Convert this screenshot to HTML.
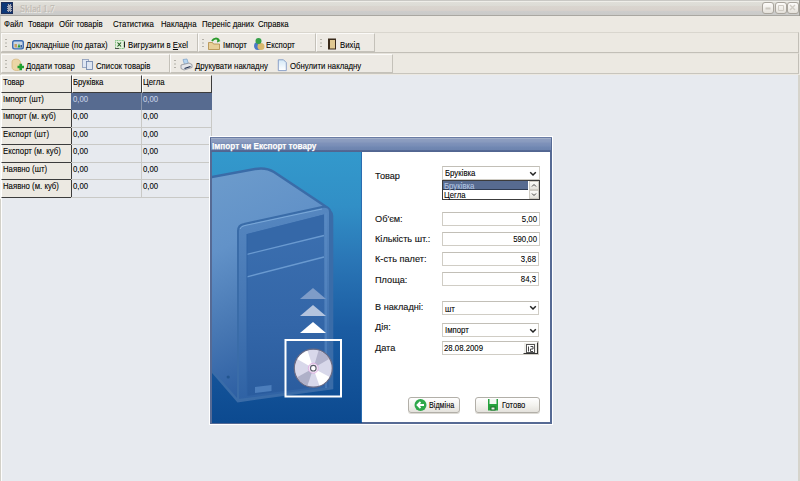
<!DOCTYPE html>
<html><head><meta charset="utf-8">
<style>
*{box-sizing:border-box}
html,body{margin:0;padding:0}
body{width:800px;height:481px;overflow:hidden;position:relative;background:#E7EAEF;font-family:"Liberation Sans",sans-serif;font-size:8.4px;line-height:10px;color:#000}
.a{position:absolute;white-space:nowrap}
.t{position:absolute;white-space:nowrap;transform:scaleX(.93);transform-origin:0 0;-webkit-text-stroke:0.08px currentColor}
.f{position:absolute;white-space:nowrap;font-size:9.5px;line-height:12px;transform:scaleX(.965);transform-origin:0 0;color:#111;-webkit-text-stroke:0.12px #111}
.tb{position:absolute;height:20px;background:#EDEAE4;border-top:1px solid #fbfaf8;border-left:1px solid #fbfaf8;border-right:1px solid #c4c1b9;border-bottom:1px solid #c4c1b9}
.grip{position:absolute;left:3px;top:4.5px;width:1.5px;height:1.5px;background:#b4b1a9;box-shadow:0 3.5px 0 #b4b1a9,0 7px 0 #b4b1a9}
.wbtn{position:absolute;top:2px;width:12px;height:12px;border:1px solid #a9a59d;border-radius:3px;background:linear-gradient(#fdfcfa,#e4e1da)}
.hc{position:absolute;background:#ECE9E2;border-top:1px solid #fff;border-left:1px solid #fff;border-right:1px solid #3c3c3c;border-bottom:1px solid #3c3c3c}
.gc{position:absolute;border-right:1px solid #c9c9c6;border-bottom:1px solid #c9c9c6}
.fld{position:absolute;background:#fff;border:1px solid #d0cdc5;border-top-color:#c2bfb7}
.chev{position:absolute;width:6px;height:6px;border-right:1.6px solid #333;border-bottom:1.6px solid #333;transform:rotate(45deg)}
.btn{position:absolute;height:16px;border:1px solid #b2afa8;border-radius:3px;background:linear-gradient(#ffffff,#f4f3ef 50%,#e4e2dc);box-shadow:0 1px 0 #dcdad4}
</style></head>
<body>
<!-- title bar -->
<div class="a" style="left:0;top:0;width:800px;height:16px;background:linear-gradient(#c9c8c4 0,#c9c8c4 1px,#efeee9 1px,#efeee9 2px,#e0dfd9 2px,#dcdbd5 6px,#dad5cf 6px,#d8d2cc 10px,#d6d0cb 10px,#d6d0cb 11px,#cdcdcc 11px,#cacac8 15px,#a9a7a1 15px,#a9a7a1 16px)"></div>
<div class="a" style="left:1px;top:2px;width:12px;height:12px;background:#0d3878;border:1px solid #1e2e58"><div class="a" style="left:5px;top:1px;width:5px;height:8px;background:#a8acb8;border:1px dotted #2a3a68"></div></div>
<div class="a" style="left:19.5px;top:2.5px;font-family:'Liberation Serif',serif;font-weight:normal;font-size:10.5px;line-height:12px;color:#bdb9b1;-webkit-text-stroke:0.2px #c4c0b8;text-shadow:1px 1px 0 #f0eee8;transform:scaleX(.87);transform-origin:0 0">Sklad 1.7</div>
<div class="wbtn" style="left:762px"></div>
<div class="wbtn" style="left:775px"></div>
<div class="wbtn" style="left:787px"></div>
<svg class="a" style="left:760px;top:0" width="40" height="16" viewBox="760 0 40 16"><path d="M765.5 8.5h5" stroke="#cdc9c1" stroke-width="2"/><path d="M778.5 5.5h5v5h-5z" stroke="#d0ccc4" stroke-width="1" fill="none"/><path d="M790 5l5 5M795 5l-5 5" stroke="#d0ccc4" stroke-width="1.4"/></svg>
<div class="a" style="left:799px;top:0;width:1px;height:16px;background:#9a988f"></div>
<!-- menu -->
<div class="a" style="left:0;top:16px;width:800px;height:59px;background:#ECE9E2"></div>
<span class="t" style="left:4px;top:19px">Файл</span>
<span class="t" style="left:28px;top:19px">Товари</span>
<span class="t" style="left:59px;top:19px">Обіг товарів</span>
<span class="t" style="left:112.5px;top:19px">Статистика</span>
<span class="t" style="left:160.5px;top:19px">Накладна</span>
<span class="t" style="left:202px;top:19px">Переніс даних</span>
<span class="t" style="left:258px;top:19px">Справка</span>
<!-- dock -->
<div class="a" style="left:1px;top:32px;width:798px;height:21px;border-top:1px solid #d9d6ce;border-right:1px solid #c2bfb7;border-bottom:1px solid #c2bfb7"></div>
<div class="a" style="left:1px;top:53px;width:798px;height:21px;border-top:1px solid #e6e3dc;border-right:1px solid #c2bfb7;border-bottom:1px solid #c8c5bd"></div>
<div class="tb" style="left:1px;top:33px;width:197px;height:19px"><div class="grip"></div></div>
<div class="tb" style="left:198px;top:33px;width:118px;height:19px"><div class="grip"></div></div>
<div class="tb" style="left:316px;top:33px;width:59px;height:19px"><div class="grip"></div></div>
<div class="tb" style="left:1px;top:54px;width:169px;height:19px"><div class="grip"></div></div>
<div class="tb" style="left:170px;top:54px;width:223px;height:19px"><div class="grip"></div></div>
<span class="t" style="left:25.8px;top:39.5px">Докладніше (по датах)</span>
<span class="t" style="left:128px;top:39.5px">Вигрузити в <u style="text-decoration-thickness:1px;text-underline-offset:1px">E</u>xel</span>
<span class="t" style="left:222.5px;top:39.5px">Імпорт</span>
<span class="t" style="left:266px;top:39.5px">Експорт</span>
<span class="t" style="left:340px;top:39.5px">Вихід</span>
<span class="t" style="left:25.6px;top:61px">Додати товар</span>
<span class="t" style="left:95.6px;top:61px">Список товарів</span>
<span class="t" style="left:194.5px;top:61px">Друкувати накладну</span>
<span class="t" style="left:289.7px;top:61px">Обнулити накладну</span>
<!-- toolbar icons -->
<svg class="a" style="left:0;top:0" width="400" height="75" viewBox="0 0 400 75">
  <!-- details icon -->
  <rect x="12.7" y="40.7" width="10.6" height="8.2" rx="1.8" fill="#c9d6e6" stroke="#3d6cb0" stroke-width="1.4"/>
  <rect x="14.5" y="44" width="2.5" height="3.5" fill="#c9a060"/><path d="M17.5 47.5l1.5-4 1.5 4z" fill="#2a9a3a"/><rect x="20.5" y="45" width="1.5" height="2.5" fill="#3a5a90"/>
  <!-- excel icon -->
  <rect x="115.5" y="40.5" width="8.5" height="8" fill="#e4f0dc" stroke="#7cc07c" stroke-width="1" stroke-dasharray="1 0.6"/>
  <path d="M117.5 42.5l3.5 4M121 42.5l-3.5 4" stroke="#1a5a1a" stroke-width="1.1"/>
  <path d="M124.5 41.5v6" stroke="#222" stroke-width="1"/><path d="M115 48.5h4" stroke="#333" stroke-width="0.8"/>
  <!-- import icon -->
  <path d="M208.5 42.5h4l1 1.5h6v5.5h-11z" fill="#e7cf99" stroke="#b08a45" stroke-width="0.8"/>
  <path d="M212 41c2-3 5-3 7 -1" stroke="#2a9a2a" stroke-width="2" fill="none"/><path d="M217.5 38.5l3 2.5-3.5 1.5z" fill="#2a9a2a"/>
  <!-- export icon -->
  <circle cx="258" cy="46" r="4" fill="#4a78c8"/><circle cx="261" cy="46.5" r="3.5" fill="#d9b86e"/><circle cx="258.5" cy="41" r="3" fill="#36a04a"/>
  <!-- exit icon -->
  <rect x="328" y="38.5" width="8" height="11" fill="#3a2a1a"/><rect x="330" y="40" width="5" height="8.5" fill="#e0c890"/>
  <!-- add icon -->
  <path d="M14 59.5c3-1 6 0 6.5 3l0.5 5c0 2.5-2 3-4.5 3s-4.5-1-4.5-3.5l0-5c0-1.5 1-2.3 2-2.5z" fill="#ebd6a6" stroke="#d2b274" stroke-width="0.7"/>
  <path d="M17.5 67h6.5M20.75 63.75v6.5" stroke="#20a030" stroke-width="2.6"/>
  <!-- list icon -->
  <rect x="82.5" y="59.5" width="6" height="8" fill="#dfe6f2" stroke="#8a9ab8" stroke-width="0.8"/>
  <rect x="86.5" y="61.5" width="6" height="8" fill="#dfe6f2" stroke="#6a80a8" stroke-width="0.8"/>
  <!-- printer icon -->
  <path d="M183 59.5l4-0.5 1.5 5-4 0.5z" fill="#b8d6f0" stroke="#7aa0c8" stroke-width="0.7"/>
  <path d="M181 65l8-2 3 1.5v3l-8 2.5-3-1.5z" fill="#e4e6ea" stroke="#8a8e96" stroke-width="0.8"/>
  <path d="M184.5 68.5l6-2" stroke="#1a2a4a" stroke-width="1.3"/>
  <!-- doc icon -->
  <defs><linearGradient id="dg" x1="0" y1="0" x2="0" y2="1"><stop offset="0" stop-color="#d4e8f6"/><stop offset="1" stop-color="#ffffff"/></linearGradient></defs><path d="M278.3 59.8h5.2l2.8 2.8v8h-8z" fill="url(#dg)" stroke="#8098c4" stroke-width="0.9"/>
</svg>
<div class="a" style="left:0;top:16px;width:1px;height:465px;background:#d2d0c8"></div>
<div class="a" style="left:1px;top:75px;width:1px;height:406px;background:#fdfdfd"></div>
<div class="a" style="left:798px;top:75px;width:2px;height:406px;background:#d6d4cc"></div>
<!-- grid -->
<div class="a" style="left:0;top:75px;width:1px;height:124px;background:#f6f6f4"></div>
<div class="hc" style="left:1px;top:75px;width:71px;height:18px"></div>
<div class="hc" style="left:72px;top:75px;width:70px;height:18px"></div>
<div class="hc" style="left:142px;top:75px;width:70px;height:18px"></div>
<span class="t" style="left:2.6px;top:77px">Товар</span>
<span class="t" style="left:73px;top:77px">Бруківка</span>
<span class="t" style="left:143px;top:77px">Цегла</span>
<div class="hc" style="left:1px;top:93.0px;width:71px;height:17.0px;border-top:none"></div>
<div class="a" style="left:71px;top:93.0px;width:141px;height:17.0px;background:#576b90"></div>
<div class="a" style="left:141px;top:93.0px;width:1px;height:17.0px;background:#8a96ac"></div>
<span class="t" style="left:2.6px;top:94.2px">Імпорт (шт)</span>
<span class="t" style="left:73px;top:94.2px; color:#c8d2e6;">0,00</span>
<span class="t" style="left:143px;top:94.2px; color:#c8d2e6;">0,00</span>
<div class="hc" style="left:1px;top:110.0px;width:71px;height:17.5px;border-top:none"></div>
<div class="gc" style="left:71px;top:110.0px;width:71px;height:17.5px"></div>
<div class="gc" style="left:141px;top:110.0px;width:71px;height:17.5px"></div>
<span class="t" style="left:2.6px;top:111.2px">Імпорт (м. куб)</span>
<span class="t" style="left:73px;top:111.2px;">0,00</span>
<span class="t" style="left:143px;top:111.2px;">0,00</span>
<div class="hc" style="left:1px;top:127.5px;width:71px;height:17.5px;border-top:none"></div>
<div class="gc" style="left:71px;top:127.5px;width:71px;height:17.5px"></div>
<div class="gc" style="left:141px;top:127.5px;width:71px;height:17.5px"></div>
<span class="t" style="left:2.6px;top:128.7px">Експорт (шт)</span>
<span class="t" style="left:73px;top:128.7px;">0,00</span>
<span class="t" style="left:143px;top:128.7px;">0,00</span>
<div class="hc" style="left:1px;top:145.0px;width:71px;height:17.5px;border-top:none"></div>
<div class="gc" style="left:71px;top:145.0px;width:71px;height:17.5px"></div>
<div class="gc" style="left:141px;top:145.0px;width:71px;height:17.5px"></div>
<span class="t" style="left:2.6px;top:146.2px">Експорт (м. куб)</span>
<span class="t" style="left:73px;top:146.2px;">0,00</span>
<span class="t" style="left:143px;top:146.2px;">0,00</span>
<div class="hc" style="left:1px;top:162.5px;width:71px;height:17.5px;border-top:none"></div>
<div class="gc" style="left:71px;top:162.5px;width:71px;height:17.5px"></div>
<div class="gc" style="left:141px;top:162.5px;width:71px;height:17.5px"></div>
<span class="t" style="left:2.6px;top:163.7px">Наявно (шт)</span>
<span class="t" style="left:73px;top:163.7px;">0,00</span>
<span class="t" style="left:143px;top:163.7px;">0,00</span>
<div class="hc" style="left:1px;top:180.0px;width:71px;height:17.5px;border-top:none"></div>
<div class="gc" style="left:71px;top:180.0px;width:71px;height:17.5px"></div>
<div class="gc" style="left:141px;top:180.0px;width:71px;height:17.5px"></div>
<span class="t" style="left:2.6px;top:181.2px">Наявно (м. куб)</span>
<span class="t" style="left:73px;top:181.2px;">0,00</span>
<span class="t" style="left:143px;top:181.2px;">0,00</span>
<!-- dialog -->
<div class="a" style="left:209px;top:136px;width:344px;height:289px;background:#fff"></div>
<div class="a" style="left:210px;top:137px;width:342px;height:287px;background:#566a94"></div>
<div class="a" style="left:210px;top:137px;width:342px;height:1px;background:#6a7ca4"></div><div class="a" style="left:211px;top:138px;width:340px;height:14px;background:linear-gradient(#a2afc8 0,#a2afc8 1px,#8e9ec0 1px,#889abe 4px,#7f92ba 5px,#788db6 8px,#7188b3 9px,#6c83ae 12px,#566a96 12px,#50648f 14px)"></div>
<div class="a" style="left:212px;top:141px;font-weight:bold;font-size:8.8px;line-height:11px;color:#fff;transform:scaleX(.93);transform-origin:0 0;-webkit-text-stroke:0.25px #fff;text-shadow:0 0 1px #5a6e98">Імпорт чи Експорт товару</div>
<div class="a" style="left:362px;top:152px;width:188px;height:270px;background:#fff"></div>
<svg class="a" style="left:212px;top:152px" width="150" height="271" viewBox="212 152 150 271">
  <defs>
    <linearGradient id="bg" x1="0" y1="0" x2="0" y2="1">
      <stop offset="0" stop-color="#3399cc"/>
      <stop offset="0.2" stop-color="#318fc6"/>
      <stop offset="0.4" stop-color="#2a76b6"/>
      <stop offset="0.65" stop-color="#1b5ca2"/>
      <stop offset="1" stop-color="#0c4a90"/>
    </linearGradient>
    <linearGradient id="tw" x1="0" y1="0" x2="0.25" y2="1">
      <stop offset="0" stop-color="#6d9ccc"/>
      <stop offset="0.35" stop-color="#6292c8"/>
      <stop offset="0.7" stop-color="#4676b2"/>
      <stop offset="1" stop-color="#2c5ea2"/>
    </linearGradient>
    <linearGradient id="fr" x1="0" y1="0" x2="0" y2="1">
      <stop offset="0" stop-color="#5687c0"/>
      <stop offset="0.5" stop-color="#4677b4"/>
      <stop offset="1" stop-color="#2f62a4"/>
    </linearGradient>
    <linearGradient id="cd" x1="0" y1="0" x2="1" y2="1">
      <stop offset="0" stop-color="#f0f0f8"/>
      <stop offset="0.3" stop-color="#dcdcec"/>
      <stop offset="0.45" stop-color="#a8a8c0"/>
      <stop offset="0.6" stop-color="#e8e8f4"/>
      <stop offset="0.8" stop-color="#c0c0d8"/>
      <stop offset="1" stop-color="#9898b0"/>
    </linearGradient>
  <clipPath id="cdc"><circle cx="313.3" cy="368.2" r="18.4"/></clipPath>
  <linearGradient id="inr" x1="0" y1="0" x2="0" y2="1"><stop offset="0" stop-color="#3c70b0"/><stop offset="0.6" stop-color="#3366a8"/><stop offset="1" stop-color="#2a5c9e"/></linearGradient>
  </defs>
  <rect x="212" y="152" width="150" height="271" fill="url(#bg)"/>
  <!-- silhouette -->
  <path d="M208 177.7 L255 169 Q266 167 274 172 L322 204 Q332 210 332 216 L332 388 L238 401 L212 371 L208 366 Z" fill="url(#tw)" stroke="#3a6ca8" stroke-width="2.6"/>
  <!-- front frame -->
  <path d="M238 231 Q238 225 244 224 L322 207 Q330 206 330 212 L330 388 L238 400 Z" fill="url(#fr)" stroke="#3a6ca8" stroke-width="2"/>
  <path d="M240 229 Q241 226 245 225.5 L322 209" fill="none" stroke="#7aa8d8" stroke-width="1"/>
  <!-- inner panel -->
  <path d="M247 234 L324 214.5 L324 386 L247 396 Z" fill="url(#inr)"/>
  <path d="M247 234 L324 214.5 L324 235.5 L247 254.3 Z" fill="#3568a8"/>
  <path d="M247 254.3 L324 235.5 M247 276.8 L324 257" stroke="#6a9ad0" stroke-width="1.3" fill="none"/>
  <path d="M247 234 L247 396" stroke="#2e62a4" stroke-width="1"/>
  <path d="M326 213 L326 388" stroke="#5a8cc6" stroke-width="1"/>
  <path d="M255 387 L271.5 385 L271.5 391 L255 393 Z" fill="#4c7ebc"/>
  <circle cx="228.2" cy="377" r="1.6" fill="#22558f"/>
  <!-- arrows -->
  <path d="M300 299 L313 288 L326 299 Z" fill="#7e9cc8"/>
  <path d="M300 316 L313 305 L326 316 Z" fill="#b4c4de"/>
  <path d="M300 333 L313 322 L326 333 Z" fill="#ffffff"/>
  <!-- cd box -->
  <rect x="285.5" y="340" width="55.5" height="56.5" fill="none" stroke="#fff" stroke-width="2"/>
  <circle cx="313.3" cy="368.2" r="19" fill="#d8d8ea" stroke="#6c6c84" stroke-width="1.2"/>
  <g clip-path="url(#cdc)">
    <path d="M313.3 368.2 L292 356 L306 346 Z" fill="#ffffff"/>
    <path d="M313.3 368.2 L335 380 L321 390 Z" fill="#ffffff"/>
    <path d="M313.3 368.2 L320 346 L334 356 Z" fill="#b4b4cc"/>
    <path d="M313.3 368.2 L306 390 L292 380 Z" fill="#aeb0c8"/>
  </g>
  <circle cx="313.3" cy="368.2" r="5" fill="#f0e8f4" stroke="#e0a8e0" stroke-width="0.8"/>
  <circle cx="313.3" cy="368.2" r="2.8" fill="#ffffff" stroke="#5a5a6a" stroke-width="1.1"/>
</svg>
<div class="a" style="left:361px;top:152px;width:1px;height:270px;background:#2a6cb0"></div>
<!-- form -->
<span class="f" style="left:375px;top:170px">Товар</span>
<div class="fld" style="left:442px;top:166px;width:98px;height:14px"></div>
<span class="t" style="left:445px;top:168px">Бруківка</span>
<svg class="a" style="left:527px;top:169.5px" width="12" height="8" viewBox="0 0 12 8"><path d="M3.2 2.2l2.8 2.8 2.8-2.8" stroke="#222" stroke-width="1.5" fill="none"/></svg>
<div class="a" style="left:442px;top:180px;width:98px;height:20px;background:#fff;border:1px solid #3c3c3c;border-top-width:1.5px;border-left-width:1.5px"></div>
<div class="a" style="left:443px;top:181px;width:85px;height:9px;background:#576b90;border-bottom:1px solid #2e3a50"></div>
<span class="t" style="left:444px;top:180.5px;color:#b4c6e2">Бруківка</span>
<span class="t" style="left:444px;top:189.5px">Цегла</span>
<div class="a" style="left:529px;top:181px;width:10px;height:9px;background:linear-gradient(#fbfbf9,#e4e2dc);border:1px solid #cfccc4"></div>
<div class="a" style="left:529px;top:190px;width:10px;height:9px;background:linear-gradient(#fbfbf9,#e4e2dc);border:1px solid #cfccc4"></div>
<svg class="a" style="left:529px;top:181px" width="10" height="18" viewBox="0 0 10 18"><path d="M3 5.5l2-2 2 2M3 12.5l2 2 2-2" stroke="#444" stroke-width="1" fill="none"/></svg>

<span class="f" style="left:375px;top:213px">Об'єм:</span>
<div class="fld" style="left:442px;top:212px;width:98px;height:14px"></div>
<span class="t" style="left:437px;width:100px;text-align:right;transform-origin:100% 0;top:214px">5,00</span>
<span class="f" style="left:375px;top:233px">Кількість шт.:</span>
<div class="fld" style="left:442px;top:232px;width:98px;height:14px"></div>
<span class="t" style="left:437px;width:100px;text-align:right;transform-origin:100% 0;top:234px">590,00</span>
<span class="f" style="left:375px;top:253px">К-сть палет:</span>
<div class="fld" style="left:442px;top:251.5px;width:97px;height:14px"></div>
<span class="t" style="left:437px;width:99px;text-align:right;transform-origin:100% 0;top:254px">3,68</span>
<span class="f" style="left:375px;top:274px">Площа:</span>
<div class="fld" style="left:442px;top:271.5px;width:97px;height:14px"></div>
<span class="t" style="left:437px;width:99px;text-align:right;transform-origin:100% 0;top:274px">84,3</span>

<span class="f" style="left:375px;top:301px">В накладні:</span>
<div class="fld" style="left:442px;top:300.5px;width:97px;height:14px"></div>
<span class="t" style="left:445px;top:303.5px">шт</span>
<svg class="a" style="left:527px;top:304px" width="12" height="8" viewBox="0 0 12 8"><path d="M3.2 2.2l2.8 2.8 2.8-2.8" stroke="#222" stroke-width="1.5" fill="none"/></svg>
<span class="f" style="left:375px;top:321px">Дія:</span>
<div class="fld" style="left:442px;top:323px;width:97px;height:14px"></div>
<span class="t" style="left:445px;top:325px">Імпорт</span>
<svg class="a" style="left:527px;top:326.5px" width="12" height="8" viewBox="0 0 12 8"><path d="M3.2 2.2l2.8 2.8 2.8-2.8" stroke="#222" stroke-width="1.5" fill="none"/></svg>
<span class="f" style="left:375px;top:342px">Дата</span>
<div class="fld" style="left:442px;top:341px;width:97px;height:14px"></div>
<span class="t" style="left:444px;top:343px">28.08.2009</span>
<div class="a" style="left:523px;top:342px;width:15px;height:12px;background:#f0efea;border-right:1.5px solid #333;border-bottom:1.5px solid #333;border-left:1px solid #fff;border-top:1px solid #fff"></div>
<svg class="a" style="left:525px;top:344px" width="11" height="9" viewBox="0 0 11 9"><rect x="1.5" y="0.5" width="8" height="8" fill="#fff" stroke="#555" stroke-width="1"/><path d="M3.5 2.5v5M5.5 2.5h2.5v2.5h-2.5v2.5h2.5" stroke="#333" stroke-width="0.9" fill="none"/></svg>

<div class="btn" style="left:408px;top:397px;width:52px"></div>
<div class="btn" style="left:475px;top:397px;width:65px"></div>
<svg class="a" style="left:400px;top:390px" width="150" height="30" viewBox="400 390 150 30">
  <circle cx="420.5" cy="405" r="6" fill="#2ea84a"/>
  <path d="M424 405h-6M420.5 402l-3 3 3 3" stroke="#fff" stroke-width="1.8" fill="none"/>
  <path d="M488 399h10v11.5h-10z" fill="#27a23e"/><rect x="489.5" y="399" width="7" height="5" fill="#f4f8f4"/><rect x="490.5" y="406.5" width="5" height="4" fill="#1c6a2a"/><rect x="491.5" y="407.5" width="3" height="2" fill="#e8f0e8"/>
</svg>
<span class="t" style="left:428.5px;top:400px;transform:scaleX(.86)">Відміна</span>
<span class="t" style="left:502px;top:400px;transform:scaleX(.9)">Готово</span>
</body></html>
